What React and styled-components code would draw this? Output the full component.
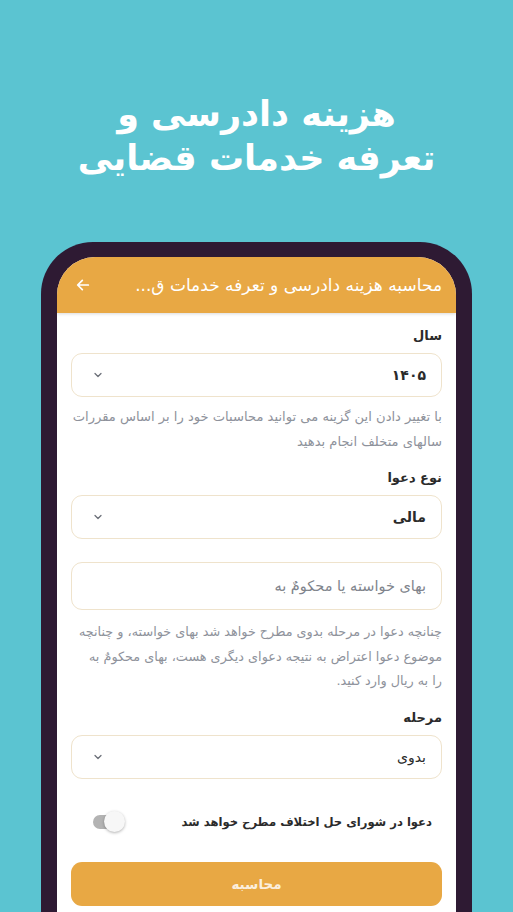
import React, { useState } from 'react';
import styled, { createGlobalStyle } from 'styled-components';

const GlobalStyles = createGlobalStyle`
    html, body {
        margin: 0;
        padding: 0;
        background: #5bc4d1;
        overflow: hidden;
    }
    * {
        box-sizing: border-box;
    }
    #root {
        font-family: 'DejaVu Sans', 'Noto Sans', sans-serif;
    }
`;

const Page = styled.div`
    width: 513px;
    height: 912px;
    background: #5bc4d1;
    display: flex;
    flex-direction: column;
    align-items: center;
    overflow: hidden;
`;

const Title = styled.h1`
    margin: 92px 0 0;
    color: #ffffff;
    font-family: 'DejaVu Sans', sans-serif;
    font-weight: 700;
    font-size: 35px;
    line-height: 44px;
    text-align: center;
    direction: rtl;
`;

const Phone = styled.div`
    margin-top: 62px;
    width: 431px;
    flex: 1;
    background: #2e1a33;
    border-radius: 52px 52px 0 0;
    padding: 15px 16px 0;
    display: flex;
`;

const Screen = styled.div`
    flex: 1;
    background: #ffffff;
    border-radius: 38px 38px 0 0;
    overflow: hidden;
    direction: rtl;
`;

const AppBar = styled.div`
    height: 56px;
    background: #e8a844;
    display: flex;
    align-items: center;
    justify-content: space-between;
    padding: 0 14px 0 18px;
    color: #ffffff;
    box-shadow: 0 1px 3px rgba(0, 0, 0, 0.15);
`;

const AppTitle = styled.span`
    font-size: 17px;
    white-space: nowrap;
`;

const Form = styled.div`
    padding: 15px 14px 0;
    display: flex;
    flex-direction: column;
`;

const Label = styled.div`
    font-size: 13px;
    font-weight: 700;
    color: #2b2b2b;
    margin: ${p => p.$top || 0}px 0 10px;
`;

const Field = styled.div`
    height: ${p => p.$h || 44}px;
    border: 1px solid #efe3cc;
    border-radius: 11px;
    display: flex;
    align-items: center;
    justify-content: space-between;
    padding: 0 15px 0 20px;
    margin-top: ${p => p.$top || 0}px;
`;

const Value = styled.span`
    font-size: 14px;
    font-weight: ${p => (p.$light ? 400 : 700)};
    color: #2b2b2b;
`;

const Placeholder = styled.span`
    font-size: 14.5px;
    color: #80848c;
`;

const Help = styled.p`
    margin: ${p => p.$top || 8}px 0 0;
    font-size: ${p => p.$size || 13.1}px;
    line-height: 24.5px;
    color: #8e929b;
`;

const ToggleRow = styled.div`
    margin-top: 36px;
    display: flex;
    align-items: center;
    justify-content: space-between;
    padding: 0 10px 0 22px;
`;

const ToggleText = styled.span`
    font-size: 11.6px;
    font-weight: 700;
    color: #2b2b2b;
`;

const Track = styled.div`
    position: relative;
    width: 31px;
    height: 14px;
    border-radius: 7px;
    background: #b3b3b3;
`;

const Knob = styled.div`
    position: absolute;
    top: -4px;
    left: ${p => (p.$on ? '0' : '11px')};
    width: 21px;
    height: 21px;
    border-radius: 50%;
    background: #f7f7f7;
    box-shadow: 0 1px 3px rgba(0, 0, 0, 0.3);
`;

const Button = styled.button`
    margin-top: 33px;
    height: 44px;
    border: none;
    border-radius: 11px;
    background: #e8a844;
    color: #fbeedd;
    font-family: inherit;
    font-size: 13.5px;
    font-weight: 700;
`;

const Chevron = () => (
    <svg width="12" height="12" viewBox="0 0 24 24" fill="none" stroke="#6b6f78" strokeWidth="2.5" strokeLinecap="round" strokeLinejoin="round">
        <path d="M6 9l6 6 6-6" />
    </svg>
);

const BackArrow = () => (
    <svg width="16" height="16" viewBox="0 0 24 24" fill="none" stroke="#ffffff" strokeWidth="2.6" strokeLinecap="round" strokeLinejoin="round">
        <path d="M20 12H5M11 5l-7 7 7 7" />
    </svg>
);

const Select = ({ value, light }) => (
    <Field>
        <Value $light={light}>{value}</Value>
        <Chevron />
    </Field>
);

export default function App() {
    const [council, setCouncil] = useState(false);

    return (
        <Page>
            <GlobalStyles />
            <Title>
                هزینه دادرسی و
                <br />
                تعرفه خدمات قضایی
            </Title>
            <Phone>
                <Screen>
                    <AppBar>
                        <AppTitle>محاسبه هزینه دادرسی و تعرفه خدمات ق...</AppTitle>
                        <BackArrow />
                    </AppBar>
                    <Form>
                        <Label>سال</Label>
                        <Select value="۱۴۰۵" />
                        <Help>
                            با تغییر دادن این گزینه می توانید محاسبات خود را بر اساس مقررات سالهای متخلف انجام بدهید
                        </Help>
                        <Label $top={16}>نوع دعوا</Label>
                        <Select value="مالی" />
                        <Field $h={48} $top={23}>
                            <Placeholder>بهای خواسته یا محکومٌ به</Placeholder>
                        </Field>
                        <Help $top={10} $size={12.8}>
                            {'چنانچه دعوا در مرحله بدوی مطرح خواهد شد بهای خواسته، و چنانچه موضوع دعوا اعتراض به نتیجه دعوای دیگری هست، بهای محکومٌ به را\u00a0به ریال وارد کنید.'}
                        </Help>
                        <Label $top={16}>مرحله</Label>
                        <Select value="بدوی" light />
                        <ToggleRow onClick={() => setCouncil(c => !c)}>
                            <ToggleText>دعوا در شورای حل اختلاف مطرح خواهد شد</ToggleText>
                            <Track>
                                <Knob $on={council} />
                            </Track>
                        </ToggleRow>
                        <Button>محاسبه</Button>
                    </Form>
                </Screen>
            </Phone>
        </Page>
    );
}
